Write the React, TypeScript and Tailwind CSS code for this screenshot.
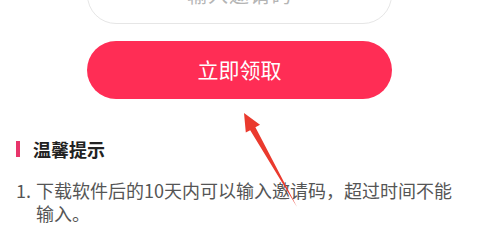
import React from "react";

export default function App() {
  return (
    <div
      className="relative w-[479px] h-[225px] overflow-hidden bg-white"
      style={{ fontFamily: '"Noto Sans CJK SC", "Noto Sans", sans-serif' }}
    >
      <div className="flex flex-col items-center">
        <div className="-mt-[34px] w-[305px] h-[58px] rounded-full border border-[#e6e6e6] bg-white flex items-center justify-center">
          <span className="text-[20px] tracking-[1px] text-[#b5b5b5]">输入邀请码</span>
        </div>
        <button className="mt-[17px] w-[305px] h-[58px] rounded-full bg-[#ff2d55] flex items-center justify-center">
          <span className="text-[21px] text-white">立即领取</span>
        </button>
      </div>

      <div className="mt-[41px] pl-[16px] flex items-center h-[18px]">
        <div className="w-[4px] h-[16px] bg-[#e8356b]" />
        <span className="ml-[13px] text-[18px] font-bold text-[#222] leading-[18px]">温馨提示</span>
      </div>

      <div className="mt-[21px] pl-[16px] pr-[24px] flex text-[18px] leading-[23px] text-[#555]">
        <span className="w-[20px] shrink-0">1.</span>
        <span>下载软件后的10天内可以输入邀请码，超过时间不能输入。</span>
      </div>

      <svg
        className="absolute left-0 top-0 pointer-events-none"
        width="479"
        height="225"
        viewBox="0 0 479 225"
      >
        <polygon
          points="244,113 260,124.8 255.4,127.2 297,207 250.2,130.2 245.8,132.6"
          fill="#ea3a2e"
        />
      </svg>
    </div>
  );
}
